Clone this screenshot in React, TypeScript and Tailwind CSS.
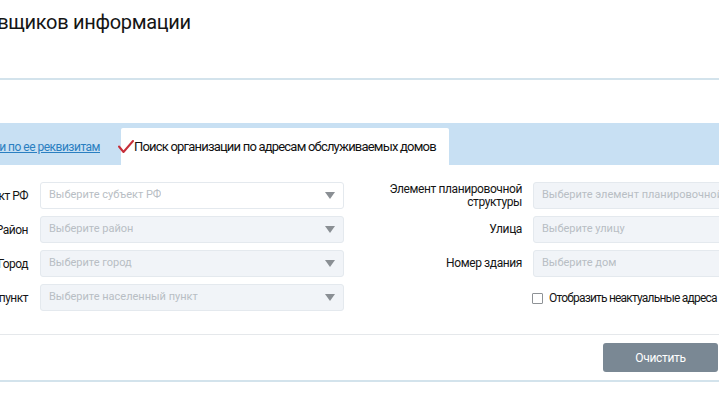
const leftFields = [
  { label: 'Субъект РФ', placeholder: 'Выберите субъект РФ', active: true },
  { label: 'Район', placeholder: 'Выберите район', active: false },
  { label: 'Город', placeholder: 'Выберите город', active: false },
  { label: 'Населенный пункт', placeholder: 'Выберите населенный пункт', active: false },
];

const rightFields = [
  { label: 'Элемент планировочной структуры', placeholder: 'Выберите элемент планировочной структуры' },
  { label: 'Улица', placeholder: 'Выберите улицу' },
  { label: 'Номер здания', placeholder: 'Выберите дом' },
];

function Arrow() {
  return (
    <svg width="10" height="7" viewBox="0 0 10 7" className="shrink-0">
      <path d="M0 0 L10 0 L5 7 Z" fill="#8a8f94" />
    </svg>
  );
}

function Select({ placeholder, active }: { placeholder: string; active?: boolean }) {
  return (
    <div
      className={`flex items-center justify-between w-[304px] h-[27px] rounded-[3px] border border-[#e4e9ee] pl-[8px] pr-[8px] ${
        active ? 'bg-white' : 'bg-[#f1f4f8]'
      }`}
    >
      <span className="text-[11px] text-[#b8bec4] whitespace-nowrap overflow-hidden">{placeholder}</span>
      <Arrow />
    </div>
  );
}

function Check() {
  return (
    <svg width="16" height="14" viewBox="0 0 16 14" className="shrink-0 -ml-[3px]">
      <path d="M1 6.5 L5.5 12 L15 1" fill="none" stroke="#c62f3a" strokeWidth="2" strokeLinecap="round" strokeLinejoin="round" />
    </svg>
  );
}

export default function App() {
  return (
    <div className="w-[719px] h-[404px] overflow-hidden bg-white text-[#151515]" style={{ fontFamily: 'Roboto, "Liberation Sans", sans-serif' }}>
      <div className="-ml-[140px] w-[1000px]">
        <div className="h-[78px] pt-[10px] pl-[17px]">
          <h1 className="text-[20px] leading-[24px] font-normal whitespace-nowrap tracking-[-0.3px]">Реестр поставщиков информации</h1>
        </div>
        <div className="h-[2px] bg-[#d3e3ec]" />

        <div className="mt-[43px] h-[42px] bg-[#c8e0f3] flex items-end">
          <div className="w-[261px] h-full flex items-center justify-end pr-[21px] pt-[5px]">
            <a className="text-[12px] text-[#2a7fc1] underline whitespace-nowrap tracking-[-0.5px]">Поиск организации по ее реквизитам</a>
          </div>
          <div className="h-[37px] w-[328px] bg-white rounded-t-[2px] flex items-center">
            <Check />
            <span className="text-[13px] text-[#111] whitespace-nowrap tracking-[-0.8px]">Поиск организации по адресам обслуживаемых домов</span>
          </div>
        </div>

        <div className="mt-[17px] flex">
          <div className="flex flex-col gap-[7px]">
            {leftFields.map((f) => (
              <div key={f.label} className="flex items-center gap-[12px]">
                <div className="w-[168px] text-right text-[12px] whitespace-nowrap tracking-[-0.5px]">{f.label}</div>
                <Select placeholder={f.placeholder} active={f.active} />
              </div>
            ))}
          </div>
          <div className="ml-[28px] flex flex-col gap-[7px]">
            {rightFields.map((f) => (
              <div key={f.label} className="flex items-center gap-[11px]">
                <div className="w-[150px] text-right text-[12px] leading-[13px] tracking-[-0.4px]">{f.label}</div>
                <Select placeholder={f.placeholder} />
              </div>
            ))}
            <div className="flex items-center gap-[11px] h-[27px] pt-[1px]">
              <div className="w-[150px]" />
              <div className="flex items-center gap-[6px] -ml-[1px]">
                <span className="w-[11px] h-[11px] border border-[#8e9296] bg-white rounded-[1px]" />
                <span className="text-[12px] whitespace-nowrap tracking-[-0.8px]">Отобразить неактуальные адреса</span>
              </div>
            </div>
          </div>
        </div>

        <div className="mt-[23px] h-px bg-[#e5e8eb]" />
        <div className="w-[858px] flex justify-end pt-[8px]">
          <button className="w-[115px] h-[29px] rounded-[3px] bg-[#7a8894] text-white text-[12px] tracking-[-0.3px]">Очистить</button>
        </div>
        <div className="mt-[8px] h-[2px] bg-[#d3e3ec]" />
      </div>
    </div>
  );
}
